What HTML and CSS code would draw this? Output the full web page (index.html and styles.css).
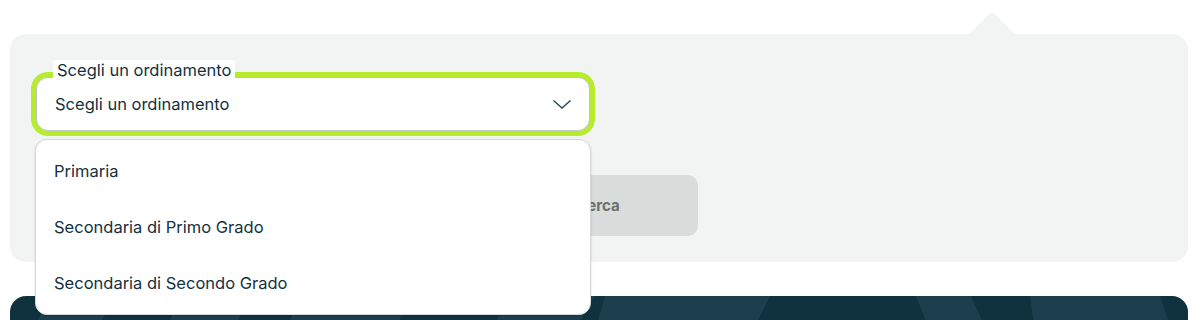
FILE: index.html
```html
<!DOCTYPE html>
<html lang="it">
<head>
<meta charset="utf-8">
<title>Ricerca</title>
<link rel="stylesheet" href="styles.css">
</head>
<body>
<div class="page">
  <section class="panel">
    <div class="select">
      <span class="label">Scegli un ordinamento</span>
      <span class="value">Scegli un ordinamento</span>
      <svg class="chevron" width="18" height="9" viewBox="0 0 18 9"><path d="M0.5 0.5 L9 8 L17.5 0.5" fill="none" stroke="#2e4753" stroke-width="1.4"/></svg>
      <ul class="menu">
        <li>Primaria</li>
        <li>Secondaria di Primo Grado</li>
        <li>Secondaria di Secondo Grado</li>
      </ul>
    </div>
    <div class="actions">
      <span class="slot"></span>
      <button class="btn">Cerca</button>
    </div>
  </section>
  <section class="banner">
    <svg class="rays" width="1178" height="60" viewBox="0 0 1178 60" preserveAspectRatio="none">
      <polygon points="40,0 108,0 68,60 10,60"/>
      <polygon points="170,0 240,0 210,60 145,60"/>
      <polygon points="290,0 400,0 375,60 265,60"/>
      <polygon points="498,0 585,0 550,60 470,60"/>
      <polygon points="595,0 760,0 730,60 578,60"/>
      <polygon points="906,0 961,0 988,60 930,60"/>
      <polygon points="1020,0 1150,0 1170,60 1028,60"/>
    </svg>
  </section>
</div>
</body>
</html>
```
FILE: styles.css
```css
html, body {
  margin: 0;
  padding: 0;
  background: #ffffff;
}
body {
  font-family: "Inter", "Noto Sans", sans-serif;
  color: #14313e;
}
.page {
  width: 1200px;
  height: 320px;
  overflow: hidden;
}
.panel {
  position: relative;
  margin: 34px 12px 0 10px;
  background: #f1f4f3;
  border-radius: 16px;
  padding: 43px 26px 26px 26px;
}
.panel::before {
  content: "";
  position: absolute;
  top: -16px;
  left: 966px;
  width: 32px;
  height: 32px;
  background: #f1f4f3;
  transform: rotate(45deg);
}
.select {
  position: relative;
  width: 554px;
  height: 54px;
  box-sizing: border-box;
  display: flex;
  align-items: center;
  justify-content: space-between;
  padding: 0 18px 0 18px;
  background: #ffffff;
  border: 1px solid #bfc4c6;
  border-radius: 12px;
  box-shadow: 0 0 0 5px #b6ec2c;
  z-index: 2;
}
.label {
  position: absolute;
  top: -18px;
  left: 16px;
  height: 20px;
  line-height: 20px;
  padding: 0 4px;
  background: #ffffff;
  border-radius: 3px;
  font-size: 16.5px;
  color: #14313e;
}
.value {
  font-size: 16.5px;
  color: #14313e;
}
.chevron {
  display: block;
}
.menu {
  position: absolute;
  top: 61px;
  left: -2px;
  width: 556px;
  box-sizing: border-box;
  margin: 0;
  padding: 3px 0;
  list-style: none;
  background: #ffffff;
  border: 1px solid #d6d8d9;
  border-radius: 12px;
  box-shadow: 0 1px 2px rgba(0,0,0,0.18);
  z-index: 5;
}
.menu li {
  height: 56px;
  line-height: 56px;
  padding-left: 18px;
  font-size: 16.5px;
  color: #14313e;
}
.actions {
  display: grid;
  grid-template-columns: 454px 200px;
  column-gap: 8px;
  margin-top: 44px;
}
.btn {
  height: 61px;
  border: none;
  border-radius: 10px;
  background: #d8dddb;
  color: #6b6f6f;
  font-family: "Inter", "Noto Sans", sans-serif;
  font-size: 15px;
  font-weight: 700;
  padding: 0;
}
.banner {
  margin: 34px 12px 0 10px;
  height: 60px;
  background: #10323f;
  border-radius: 16px 16px 0 0;
  overflow: hidden;
}
.rays {
  display: block;
}
.rays polygon {
  fill: #1d3e4c;
}
```
